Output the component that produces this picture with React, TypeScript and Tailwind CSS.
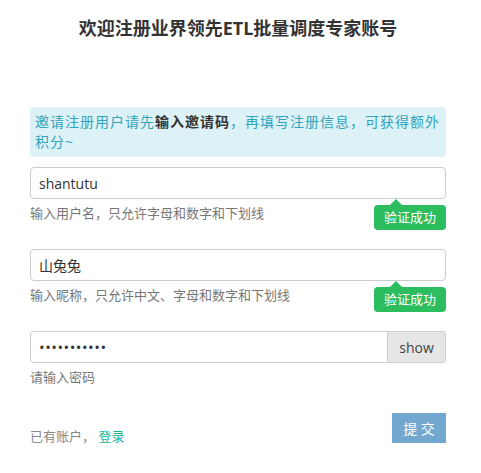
import { useState } from "react";

const font = `font-['Open_Sans','Noto_Sans_CJK_SC',sans-serif]`;

function Badge() {
  // green "验证成功" tip with a small arrow pointing at the input above
  return (
    <div className="absolute right-0 top-[6px] h-[25px] w-[72px] rounded-[4px] bg-[#2bbd5e] text-[13px] leading-[25px] text-white text-center">
      <span className="absolute left-[16px] top-[-6px] h-0 w-0 border-x-[6px] border-b-[6px] border-x-transparent border-b-[#2bbd5e]" />
      验证成功
    </div>
  );
}

export default function App() {
  const [name, setName] = useState("shantutu");
  const [nick, setNick] = useState("山兔兔");
  const [pwd, setPwd] = useState("12345678901");
  const [show, setShow] = useState(false);

  return (
    <div className={`w-[481px] min-h-[473px] bg-white pl-[30px] pr-[35px] ${font}`}>
      <h1 className="pt-[17px] text-center text-[18px] font-bold leading-[22px] text-[#333]">
        欢迎注册业界领先ETL批量调度专家账号
      </h1>

      {/* invite notice */}
      <div className="mt-[68px] rounded-[4px] bg-[#dcf2f6] px-[5px] py-[5px] text-[14px] leading-[20px] tracking-[1px] text-[#31a3bd] whitespace-nowrap">
        邀请注册用户请先<b className="font-bold text-[#333]">输入邀请码</b>，再填写注册信息，可获得额外
        <br />
        积分~
      </div>

      <div className="mt-[10px]">
        <input
          value={name}
          onChange={(e) => setName(e.target.value)}
          className="block h-[32px] w-full rounded-[4px] border border-[#ccc] px-[8px] text-[14px] text-[#333] outline-none"
        />
        <div className="relative pt-[5px]">
          <p className="text-[13px] leading-[18px] text-[#777]">
            输入用户名，只允许字母和数字和下划线
          </p>
          <Badge />
        </div>
      </div>

      <div className="mt-[27px]">
        <input
          value={nick}
          onChange={(e) => setNick(e.target.value)}
          className="block h-[32px] w-full rounded-[4px] border border-[#ccc] px-[8px] text-[14px] text-[#333] outline-none"
        />
        <div className="relative pt-[5px]">
          <p className="text-[13px] leading-[18px] text-[#777]">
            输入昵称，只允许中文、字母和数字和下划线
          </p>
          <Badge />
        </div>
      </div>

      <div className="mt-[27px]">
        <div className="flex h-[32px]">
          <input
            type={show ? "text" : "password"}
            value={pwd}
            onChange={(e) => setPwd(e.target.value)}
            className="h-full min-w-0 flex-1 rounded-l-[4px] border border-[#ccc] px-[8px] text-[15px] tracking-[0.5px] text-[#333] outline-none"
          />
          <button
            type="button"
            onClick={() => setShow(!show)}
            className="h-full w-[58px] rounded-r-[4px] border border-l-0 border-[#ccc] bg-[#e6e6e6] text-[14px] text-[#444]"
          >
            show
          </button>
        </div>
        <p className="mt-[5px] text-[13px] leading-[18px] text-[#777]">请输入密码</p>
      </div>

      <div className="mt-[27px] flex items-start justify-between">
        <p className="mt-[14px] text-[13px] leading-[18px] text-[#888]">
          已有账户， <a className="text-[#1ab394]">登录</a>
        </p>
        <button
          type="button"
          className="h-[30px] w-[54px] bg-[#72a7cf] text-[14px] text-white"
        >
          提 交
        </button>
      </div>
    </div>
  );
}
